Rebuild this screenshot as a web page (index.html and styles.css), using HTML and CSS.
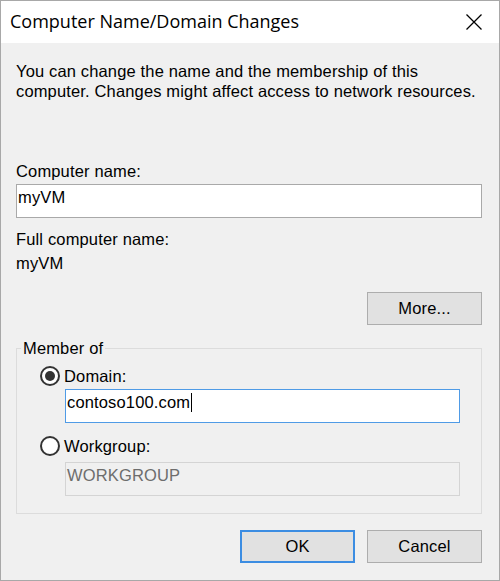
FILE: index.html
```html
<!DOCTYPE html>
<html lang="en">
<head>
<meta charset="utf-8">
<title>Computer Name/Domain Changes</title>
<link rel="stylesheet" href="styles.css">
</head>
<body>
<div class="window">
  <div class="titlebar">
    <span class="title">Computer Name/Domain Changes</span>
    <svg class="close" width="16" height="16" viewBox="0 0 16 16" aria-label="Close">
      <path d="M0.5 0.5 L15.5 15.5 M15.5 0.5 L0.5 15.5" stroke="#000" stroke-width="1.3" fill="none"/>
    </svg>
  </div>
  <div class="content">
    <p class="intro">You can change the name and the membership of this computer. Changes might affect access to network resources.</p>
    <div class="label-name">Computer name:</div>
    <div class="textbox">myVM</div>
    <div class="label-full">Full computer name:</div>
    <div class="value">myVM</div>
    <div class="more-row"><button class="btn">More...</button></div>
    <fieldset class="group">
      <legend class="legend">Member of</legend>
      <div class="group-body">
        <div class="radio-row"><span class="radio checked"></span><span>Domain:</span></div>
        <div class="textbox inner focused">contoso100.com<span class="caret"></span></div>
        <div class="radio-row second"><span class="radio"></span><span>Workgroup:</span></div>
        <div class="textbox inner disabled second-box">WORKGROUP</div>
      </div>
    </fieldset>
    <div class="footer">
      <button class="btn default">OK</button>
      <button class="btn">Cancel</button>
    </div>
  </div>
</div>
</body>
</html>
```
FILE: styles.css
```css
html, body {
  margin: 0;
  padding: 0;
  background: #f0f0f0;
}
.window {
  width: 500px;
  height: 581px;
  box-sizing: border-box;
  border: 1px solid #a8a8a8;
  display: flex;
  flex-direction: column;
  overflow: hidden;
}
.titlebar {
  height: 42px;
  flex: none;
  background: #fff;
  display: flex;
  align-items: center;
  justify-content: space-between;
  padding: 0 17px 2px 9px;
  box-sizing: border-box;
}
.title {
  font-family: "Open Sans", "Noto Sans", sans-serif;
  font-size: 18px;
  line-height: 24px;
  color: #000;
}
.close {
  display: block;
  margin-top: 1px;
}
.content {
  flex: 1;
  background: #f0f0f0;
  padding: 18px 17px 0 15px;
  font-family: "Liberation Sans", Arial, sans-serif;
  font-size: 16.5px;
  letter-spacing: 0.15px;
  line-height: 20px;
  color: #000;
}
.intro {
  margin: 0;
  max-width: 465px;
}
.label-name {
  margin-top: 60px;
}
.textbox {
  height: 34px;
  box-sizing: border-box;
  border: 1px solid #a9a9a9;
  background: #fff;
  padding: 2px 1px;
  margin-top: 3px;
  white-space: nowrap;
}
.label-full {
  margin-top: 11px;
}
.value {
  margin-top: 4px;
}
.more-row {
  margin-top: 19px;
  display: flex;
  justify-content: flex-end;
}
.btn {
  width: 115px;
  height: 33px;
  box-sizing: border-box;
  background: #e1e1e1;
  border: 1px solid #adadad;
  font-family: "Liberation Sans", Arial, sans-serif;
  font-size: 16.5px;
  letter-spacing: 0.15px;
  color: #000;
  padding: 0;
  margin: 0;
}
.btn.default {
  border: 2px solid #3c8de2;
}
.group {
  margin: 13px 0 0 0;
  border: 1px solid #dcdcdc;
  padding: 8px 0 17px 0;
  min-width: 0;
}
.legend {
  padding: 0 2px;
  margin-left: 4px;
}
.group-body {
  padding-left: 23px;
}
.radio-row {
  display: flex;
  align-items: center;
  gap: 4px;
  height: 20px;
}
.radio-row.second {
  margin-top: 13px;
}
.radio {
  width: 20px;
  height: 20px;
  box-sizing: border-box;
  border: 2px solid #333;
  border-radius: 50%;
  background: #fff;
  display: flex;
  align-items: center;
  justify-content: center;
}
.radio.checked::after {
  content: "";
  width: 10px;
  height: 10px;
  border-radius: 50%;
  background: #333;
}
.textbox.inner {
  margin-left: 25px;
  width: 395px;
}
.textbox.focused {
  border-color: #4f9be6;
}
.textbox.disabled {
  background: #f0f0f0;
  border-color: #d4d4d4;
  color: #6d6d6d;
}
.textbox.second-box {
  margin-top: 6px;
}
.caret {
  display: inline-block;
  width: 1px;
  height: 19px;
  background: #000;
  vertical-align: -4px;
  margin-left: 1px;
}
.footer {
  margin-top: 16px;
  display: flex;
  justify-content: flex-end;
  gap: 12px;
}
```
